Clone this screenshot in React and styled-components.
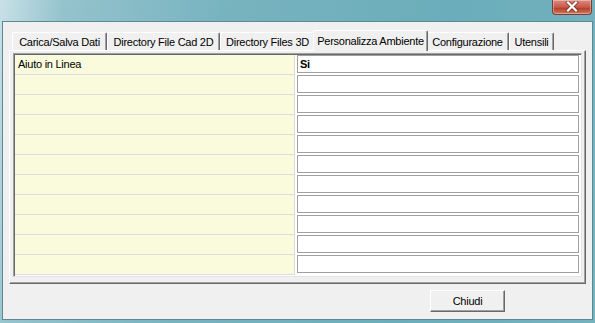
import React from 'react';
import styled, { createGlobalStyle } from 'styled-components';

const GlobalStyle = createGlobalStyle`
  html, body {
    margin: 0;
    padding: 0;
  }
  body {
    font-family: "Liberation Sans", Arial, sans-serif;
    font-size: 11px;
    letter-spacing: -0.25px;
    color: #000;
  }
`;

const tabs = [
  { label: 'Carica/Salva Dati', width: 95 },
  { label: 'Directory File Cad 2D', width: 113 },
  { label: 'Directory Files 3D', width: 95 },
  { label: 'Personalizza Ambiente', width: 115, active: true },
  { label: 'Configurazione', width: 83 },
  { label: 'Utensili', width: 45 },
];

const rows = [
  { name: 'Aiuto in Linea', value: 'Si' },
  {}, {}, {}, {}, {}, {}, {}, {}, {}, {},
];

const CloseIcon = () => (
  <svg width="14" height="11" viewBox="0 0 14 11">
    <path d="M3 1.5 L11 9.5 M11 1.5 L3 9.5" stroke="#5a1c14" strokeWidth="4" strokeLinecap="square" opacity="0.55" />
    <path d="M3 1.5 L11 9.5 M11 1.5 L3 9.5" stroke="#fff" strokeWidth="2.2" strokeLinecap="square" />
  </svg>
);

const App = () => {
  return (
    <Window>
      <GlobalStyle />
      <TitleBar>
        <CloseBtn>
          <CloseIcon />
        </CloseBtn>
      </TitleBar>
      <Client>
        <TabStrip>
          {tabs.map((t) => (
            <Tab key={t.label} $w={t.width} $active={t.active}>
              {t.label}
            </Tab>
          ))}
        </TabStrip>
        <Panel>
          <Grid>
            {rows.map((r, i) => (
              <Row key={i}>
                <NameCell>{r.name}</NameCell>
                <ValueCell>
                  <ValueBox>{r.value}</ValueBox>
                </ValueCell>
              </Row>
            ))}
          </Grid>
        </Panel>
        <Footer>
          <Button>Chiudi</Button>
        </Footer>
      </Client>
    </Window>
  );
};

const Window = styled.div`
  width: 595px;
  height: 323px;
  display: flex;
  flex-direction: column;
  box-sizing: border-box;
  padding: 0 1px 0 2px;
  background: linear-gradient(100deg, #c9e1e7 0%, #94c3cd 10%, #77b3bf 35%, #6badba 70%, #74b2be 100%);
`;

const TitleBar = styled.div`
  height: 21px;
  display: flex;
  justify-content: flex-end;
  align-items: flex-start;
  padding-right: 2px;
`;

const CloseBtn = styled.div`
  width: 40px;
  height: 15px;
  box-sizing: border-box;
  display: flex;
  align-items: center;
  justify-content: center;
  padding-bottom: 1px;
  border: 1px solid #7b3a33;
  border-top: none;
  border-radius: 0 0 4px 4px;
  background: linear-gradient(#dc8c80, #c75a48 50%, #b8402c 60%, #cf7a5e);
  box-shadow: inset 0 0 0 1px rgba(255, 255, 255, 0.35);
`;

const Client = styled.div`
  width: 591px;
  height: 299px;
  box-sizing: border-box;
  border: 1px solid #5e8893;
  background: #f0f0f0;
  display: flex;
  flex-direction: column;
  padding: 8px 0 0 6px;
`;

const TabStrip = styled.div`
  height: 20px;
  display: flex;
  align-items: flex-end;
  padding-left: 3px;
  position: relative;
  z-index: 1;
`;

const Tab = styled.div`
  width: ${(p) => p.$w}px;
  height: ${(p) => (p.$active ? 21 : 18)}px;
  margin: ${(p) => (p.$active ? '0 -2px -1px' : '0')};
  box-sizing: border-box;
  display: flex;
  justify-content: center;
  padding-top: ${(p) => (p.$active ? 4 : 3)}px;
  white-space: nowrap;
  overflow: hidden;
  background: #f0f0f0;
  border-top: 1px solid #fff;
  border-left: 1px solid #fff;
  border-right: 1px solid #696969;
  box-shadow: inset -1px 0 0 #a0a0a0;
  border-radius: 2px 2px 0 0;
  position: relative;
  z-index: ${(p) => (p.$active ? 2 : 1)};
`;

const Panel = styled.div`
  width: 577px;
  height: 234px;
  box-sizing: border-box;
  border-top: 1px solid #fff;
  border-left: 1px solid #fff;
  border-right: 1px solid #696969;
  border-bottom: 1px solid #696969;
  box-shadow: inset -1px -1px 0 #a0a0a0;
  padding: 2px 3px 6px 3px;
`;

const Grid = styled.div`
  width: 569px;
  box-sizing: border-box;
  border-top: 1px solid #a0a0a0;
  border-left: 1px solid #a0a0a0;
  border-right: 1px solid #e3e3e3;
  border-bottom: 1px solid #e3e3e3;
  box-shadow: inset 1px 1px 0 #696969;
  padding: 1px 0 1px 1px;
  background: #fff;
  display: flex;
  flex-direction: column;
`;

const Row = styled.div`
  height: 20px;
  display: flex;
`;

const NameCell = styled.div`
  width: 280px;
  box-sizing: border-box;
  background: #f9fbdc;
  border-right: 1px solid #dcdcdc;
  border-bottom: 1px solid #dcdcdc;
  padding: 3px 0 0 3px;
  white-space: nowrap;
`;

const ValueCell = styled.div`
  flex: 1;
  padding: 0 2px;
`;

const ValueBox = styled.div`
  height: 18px;
  box-sizing: border-box;
  border: 1px solid #a0a0a0;
  padding: 2px 0 0 2px;
  font-weight: bold;
`;

const Footer = styled.div`
  display: flex;
  padding: 6px 0 0 421px;
`;

const Button = styled.button`
  width: 75px;
  height: 22px;
  box-sizing: border-box;
  background: #f0f0f0;
  font-family: "Liberation Sans", Arial, sans-serif;
  font-size: 11px;
  letter-spacing: -0.25px;
  color: #000;
  border-top: 1px solid #fff;
  border-left: 1px solid #fff;
  border-right: 1px solid #696969;
  border-bottom: 1px solid #696969;
  box-shadow: inset -1px -1px 0 #a0a0a0;
  padding: 0;
`;

export default App;
